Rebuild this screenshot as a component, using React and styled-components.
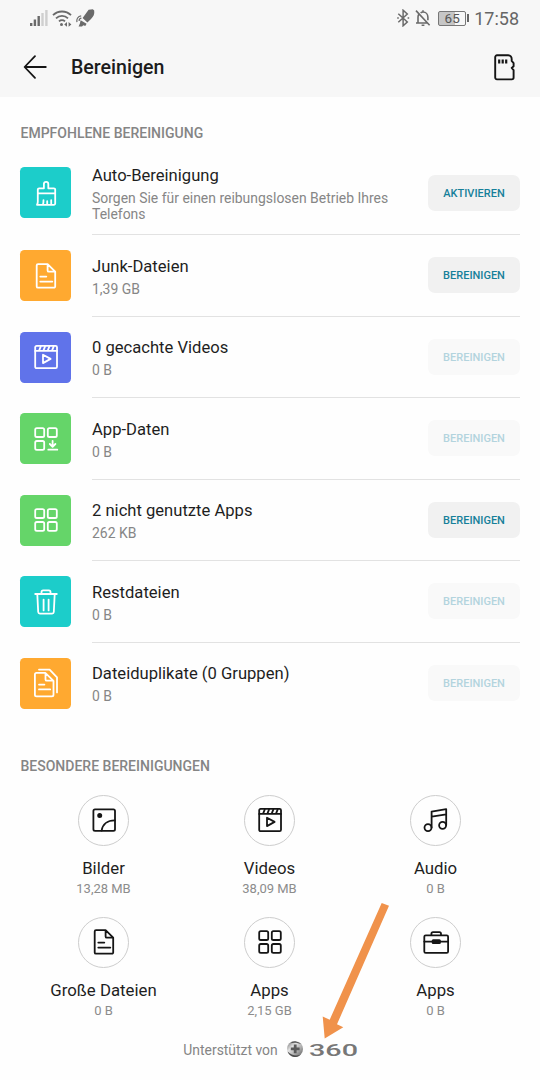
import React from 'react'
import styled, { createGlobalStyle } from 'styled-components'

const GlobalStyle = createGlobalStyle`
  * {
    box-sizing: border-box;
  }
  body {
    margin: 0;
    background: #fefefe;
    font-family: Roboto, "Noto Sans", sans-serif;
  }
`;

const FileIcon = () => (
  <Icon viewBox="0 0 30 30">
    <path d="M7 3.1h9.6l7.6 7.6v14.7a1.3 1.3 0 0 1-1.3 1.3H7a1.3 1.3 0 0 1-1.3-1.3v-21A1.3 1.3 0 0 1 7 3.1zM16.6 3.4v6a1.3 1.3 0 0 0 1.3 1.3h6M9.3 15.6h6M9.3 20.6h12" />
  </Icon>
)

const VideoIcon = () => (
  <Icon viewBox="0 0 30 30">
    <rect x="4.2" y="3.9" width="21.8" height="22.3" rx="1.4" />
    <path d="M4.2 8.9h21.8M8.3 8.2l1.4-3.6M12.6 8.2l1.4-3.6M16.9 8.2l1.4-3.6M21.2 8.2l1.4-3.6M12 12.7v8.4l7.6-4.2z" />
  </Icon>
)

const AppsIcon = () => (
  <Icon viewBox="0 0 30 30">
    <rect x="4.2" y="4.2" width="9" height="8.8" rx="1.6" />
    <rect x="16.8" y="4.2" width="9" height="8.8" rx="1.6" />
    <rect x="4.2" y="17" width="9" height="8.8" rx="1.6" />
    <rect x="16.8" y="17" width="9" height="8.8" rx="1.6" />
  </Icon>
)

const AppDataIcon = () => (
  <Icon viewBox="0 0 30 30">
    <rect x="4.2" y="4.2" width="9" height="8.8" rx="1.6" />
    <rect x="16.8" y="4.2" width="9" height="8.8" rx="1.6" />
    <rect x="4.2" y="17" width="9" height="8.8" rx="1.6" />
    <path d="M21.6 16.8v5.6M18.8 20l2.8 2.8 2.8-2.8M17.3 25.7h9" />
  </Icon>
)

const BrushIcon = () => (
  <Icon viewBox="0 0 30 30">
    <path d="M6.8 11.6a1.3 1.3 0 0 1 1.3-1.3h4.8V6a2.2 2.2 0 0 1 4.4 0v4.3h5.6a1.3 1.3 0 0 1 1.3 1.3v13.9a1.3 1.3 0 0 1-1.3 1.3H6c.6-1 .8-2 .8-3zM6.8 15.4h17.4M11.9 26.6c.5-1.2.6-2.6.6-4.4M16.2 26.4v-3.3M20.2 26.4v-4.2" />
  </Icon>
)

const TrashIcon = () => (
  <Icon viewBox="0 0 30 30">
    <path d="M4.2 7h21.6M10.5 6.8V5a1.6 1.6 0 0 1 1.6-1.6h5.8A1.6 1.6 0 0 1 19.5 5v1.8M6.3 7l.9 18a1.7 1.7 0 0 0 1.7 1.6h12.2a1.7 1.7 0 0 0 1.7-1.6l.9-18M12.6 12.6v10.8M17.6 12.6v10.8" />
  </Icon>
)

const DuplicateIcon = () => (
  <Icon viewBox="0 0 30 30">
    <path d="M5.5 4.9h8.8l8.2 8v13.9a1.6 1.6 0 0 1-1.6 1.6H5.5a1.6 1.6 0 0 1-1.6-1.6V6.5a1.6 1.6 0 0 1 1.6-1.6zM14.5 5.2v6.2a1.3 1.3 0 0 0 1.3 1.3h6.4M8 16.6h5.4M8 21.4h11.2M8 1.6h10.6l7.4 7.8v15" />
  </Icon>
)

const PictureIcon = () => (
  <Icon viewBox="0 0 30 30">
    <rect x="4.4" y="4.4" width="21.6" height="21.4" rx="1.6" />
    <circle cx="10.7" cy="10.6" r="1.6" fill="currentColor" />
    <path d="M12.6 25.6c1-6 5.6-10.2 13.2-10.2" />
  </Icon>
)

const MusicIcon = () => (
  <Icon viewBox="0 0 30 30">
    <circle cx="7" cy="22.6" r="3.5" />
    <circle cx="21.6" cy="20.3" r="3.5" />
    <path d="M10.6 22.4V6.6l14.6-2.5v16M10.8 11.7l14.4-2.4" />
  </Icon>
)

const CaseIcon = () => (
  <Icon viewBox="0 0 30 30">
    <rect x="3.3" y="8.3" width="23.8" height="17.6" rx="1.4" />
    <path d="M10.4 8.2V6.7a1.6 1.6 0 0 1 1.6-1.6h6.4A1.6 1.6 0 0 1 20 6.7v1.5M3.3 14.6h23.8" />
    <rect x="11.6" y="13.2" width="7.4" height="2.8" rx=".6" fill="currentColor" />
  </Icon>
)

const tasks = [
  { title: 'Auto-Bereinigung', info: 'Sorgen Sie für einen reibungslosen Betrieb Ihres Telefons', color: '#1ccdca', icon: BrushIcon, action: 'AKTIVIEREN', active: true },
  { title: 'Junk-Dateien', info: '1,39 GB', color: '#ffa930', icon: FileIcon, action: 'BEREINIGEN', active: true },
  { title: '0 gecachte Videos', info: '0 B', color: '#6073ea', icon: VideoIcon, action: 'BEREINIGEN' },
  { title: 'App-Daten', info: '0 B', color: '#65d569', icon: AppDataIcon, action: 'BEREINIGEN' },
  { title: '2 nicht genutzte Apps', info: '262 KB', color: '#65d569', icon: AppsIcon, action: 'BEREINIGEN', active: true },
  { title: 'Restdateien', info: '0 B', color: '#1ccdca', icon: TrashIcon, action: 'BEREINIGEN' },
  { title: 'Dateiduplikate (0 Gruppen)', info: '0 B', color: '#ffa930', icon: DuplicateIcon, action: 'BEREINIGEN' },
]

const categories = [
  { name: 'Bilder', size: '13,28 MB', icon: PictureIcon },
  { name: 'Videos', size: '38,09 MB', icon: VideoIcon },
  { name: 'Audio', size: '0 B', icon: MusicIcon },
  { name: 'Große Dateien', size: '0 B', icon: FileIcon },
  { name: 'Apps', size: '2,15 GB', icon: AppsIcon },
  { name: 'Apps', size: '0 B', icon: CaseIcon },
]

const StatusBar = () => (
  <Status>
    <StatusGroup>
      <svg width="18" height="17" viewBox="0 0 18 17">
        <path d="M0 13h2.4v3H0zM3.7 9.5h2.4V16H3.7zM7.5 6h2.4v10H7.5z" fill="#6a6a6a" />
        <path d="M11.3 3h2.4v13h-2.4zM15.2 0h2.4v16h-2.4z" fill="#cfcfcf" />
      </svg>
      <WifiIcon viewBox="0 0 20 17">
        <path d="M1 5.2a12.8 12.8 0 0 1 18 0M4 8.4a8.6 8.6 0 0 1 12 0M7 11.4a4.4 4.4 0 0 1 6 0" fill="none" stroke="#6a6a6a" strokeWidth="1.8" />
        <circle cx="9.5" cy="14.4" r="1.5" fill="#6a6a6a" />
        <path d="M12.2 14.4l2.8-2.3v4.6zM19.4 14.4l-2.8-2.3v4.6z" fill="#6a6a6a" />
      </WifiIcon>
      <RocketIcon viewBox="0 0 19 18">
        <path d="M12.6.8l4.200-.600 1.400 1.400c.500 3.600-.600 6-3.200 8.400L11.400 13.400 6.600 9z" fill="#6a6a6a" />
        <path d="M4.600 11.200l6 3.600-1.300 2.200-2-.700-1.300 1.300H2.600l1.300-3z" fill="#6a6a6a" />
        <path d="M1 13.200C.300 9.900 1.900 7.300 5.200 6.900M3.200 12c-.200-1.700.600-2.700 2.200-2.900" fill="none" stroke="#6a6a6a" strokeWidth="1.200" />
      </RocketIcon>
    </StatusGroup>
    <StatusGroup>
      <svg width="13" height="18" viewBox="0 0 13 18" fill="none" stroke="#6a6a6a" strokeWidth="1.500">
        <path d="M1.300 4.800l9 8.200-4.200 3.800V1.200l4.200 3.800-9 8.200" />
        <path d="M.200 9h1.600M10.600 9h1.600" strokeWidth="1.700" />
      </svg>
      <BellIcon viewBox="0 0 16 18" fill="none" stroke="#6a6a6a" strokeWidth="1.600">
        <path d="M3 14V8.200c0-1 .200-1.900.700-2.700M5.600 3.900C6.400 3.300 7.200 3 8 3c2.800 0 4.900 2.300 4.900 5.200v3M1 14h11.800M8 3V1.200M6.600 16.200h2.800M1 1.600l13.600 14.600" />
      </BellIcon>
      <Battery><BatteryText>65</BatteryText></Battery>
      <BatteryTip />
      <Clock>17:58</Clock>
    </StatusGroup>
  </Status>
)

const App = () => {
  return (
    <Screen>
      <GlobalStyle />
      <Header>
        <StatusBar />
        <TitleBar>
          <svg width="24" height="26" viewBox="0 0 24 26" fill="none" stroke="#151515" strokeWidth="1.800" strokeLinecap="round" strokeLinejoin="round">
            <path d="M12 2.200L1.600 13 12 23.800M1.900 13h20.900" />
          </svg>
          <Title>Bereinigen</Title>
          <svg width="22" height="27" viewBox="0 0 22 27" fill="none" stroke="#151515" strokeWidth="1.900" strokeLinejoin="round">
            <path d="M3 1.300h11.300c2 0 3.400 1.800 3.400 4v1.600l1.900 2.200v3.200l-1.900 1.600 1.900 2.200v7.500a1.800 1.800 0 0 1-1.800 1.800H3a1.800 1.800 0 0 1-1.800-1.800V3.100A1.800 1.800 0 0 1 3 1.300z" />
            <path d="M5.200 5.600v4M8.700 5.600v4M12.200 5.600v4" strokeWidth="2.200" />
          </svg>
        </TitleBar>
      </Header>

      <SectionTitle>EMPFOHLENE BEREINIGUNG</SectionTitle>
      <TaskList>
        {tasks.map((t, i) => (
          <TaskRow key={t.title} $first={i === 0}>
            <Tile $color={t.color}><t.icon /></Tile>
            <TaskBody $last={i === tasks.length - 1}>
              <TaskText>
                <TaskTitle>{t.title}</TaskTitle>
                <TaskInfo>{t.info}</TaskInfo>
              </TaskText>
              <ActionButton disabled={!t.active}>{t.action}</ActionButton>
            </TaskBody>
          </TaskRow>
        ))}
      </TaskList>

      <SectionTitle $second>BESONDERE BEREINIGUNGEN</SectionTitle>
      <CategoryGrid>
        {categories.map((c, i) => (
          <Category key={i}>
            <Circle><c.icon /></Circle>
            <CategoryName>{c.name}</CategoryName>
            <CategorySize>{c.size}</CategorySize>
          </Category>
        ))}
      </CategoryGrid>

      <Footer>
        <span>Unterstützt von</span>
        <Emblem viewBox="0 0 18 18">
          <defs>
            <linearGradient id="metal" x1="0" y1="0" x2="1" y2="1">
              <stop offset="0" stopColor="#666" />
              <stop offset=".35" stopColor="#e4e4e4" />
              <stop offset=".65" stopColor="#aaa" />
              <stop offset="1" stopColor="#555" />
            </linearGradient>
          </defs>
          <circle cx="9" cy="9" r="8" fill="url(#metal)" />
          <path d="M1.500 11.500a8 8 0 0 0 13 3.300c-4 1.500-9 1-13-3.300z" fill="#4c4c4c" />
          <path d="M4 3.300a8 8 0 0 1 11.600 1.200C12 2.700 8 2.200 4 3.300z" fill="#555" />
          <path d="M7.800 4.500h2.800v3h3v2.700h-3v3H7.800v-3h-3V7.500h3z" fill="#5a5a5a" />
        </Emblem>
        <Brand width="52" height="20" viewBox="0 0 52 20">
          <text x="1" y="15.500" textLength="49" lengthAdjust="spacingAndGlyphs">360</text>
        </Brand>
      </Footer>

      <Pointer width="70" height="138" viewBox="0 0 70 138">
        <path d="M61.700 1l7.300 2.700-52 118.600 6.300 3L4.700 136.500 2.700 114.500l7 3.200z" fill="#f0924b" />
      </Pointer>
    </Screen>
  )
}

const Screen = styled.div`
  position: relative;
  width: 540px;
  height: 1080px;
  overflow: hidden;
  background: #fefefe;
`;

const Header = styled.header`
  height: 97px;
  background: #f7f7f7;
`;

const Status = styled.div`
  height: 36px;
  padding: 0 21px 0 30px;
  display: flex;
  justify-content: space-between;
  align-items: center;
`;

const StatusGroup = styled.div`
  display: flex;
  align-items: center;
`;

const WifiIcon = styled.svg`
  width: 20px;
  height: 17px;
  margin-left: 4px;
`;

const RocketIcon = styled.svg`
  width: 19px;
  height: 18px;
  margin-left: 4px;
`;

const BellIcon = styled.svg`
  width: 16px;
  height: 18px;
  margin-left: 5px;
`;

const Battery = styled.div`
  width: 28px;
  height: 15px;
  margin-left: 7px;
  border: 1px solid #777;
  border-radius: 2px;
  display: flex;
  align-items: center;
  justify-content: center;
  background: linear-gradient(to right, #c6c6c6 62%, #f7f7f7 62%);
`;

const BatteryText = styled.span`
  font-size: 13.5px;
  line-height: 13px;
  color: #555;
`;

const BatteryTip = styled.div`
  width: 2px;
  height: 8px;
  margin-left: 1px;
  background: #666;
`;

const Clock = styled.span`
  margin-left: 5px;
  font-size: 18px;
  line-height: 22px;
  padding-top: 1px;
  color: #666;
`;

const TitleBar = styled.div`
  height: 61px;
  padding: 1px 24px 0 23px;
  display: flex;
  align-items: center;
`;

const Title = styled.h1`
  flex: 1;
  margin: 1px 0 0 24px;
  font-size: 19.6px;
  font-weight: 500;
  line-height: 24px;
  color: #1c1c1c;
`;

const SectionTitle = styled.h2`
  margin: ${props => (props.$second ? '32px' : '26px')} 0 0;
  padding-left: 20.5px;
  font-size: 14px;
  font-weight: 500;
  line-height: 20px;
  color: #858585;
`;

const TaskList = styled.div`
  padding: 8px 20px 0;
`;

const TaskRow = styled.div`
  height: ${props => (props.$first ? '84px' : '81.5px')};
  display: flex;
  align-items: center;
`;

const Tile = styled.div`
  width: 51px;
  height: 51px;
  margin-left: .4px;
  margin-bottom: .4px;
  border-radius: 4.5px;
  display: flex;
  align-items: center;
  justify-content: center;
  color: #fff;
  background: ${props => props.$color};
`;

const Icon = styled.svg`
  width: 30px;
  height: 30px;
  display: block;
  fill: none;
  stroke: currentColor;
  stroke-width: 1.8;
  stroke-linecap: round;
  stroke-linejoin: round;

  [fill="currentColor"] {
    fill: currentColor;
  }
`;

const TaskBody = styled.div`
  flex: 1;
  height: 100%;
  margin-left: 20.6px;
  display: flex;
  align-items: center;
  justify-content: space-between;
  border-bottom: 1px solid ${props => (props.$last ? 'transparent' : '#e2e2e2')};
`;

const TaskText = styled.div`
  width: 315px;
  padding-top: 2px;
`;

const TaskTitle = styled.div`
  font-size: 16.6px;
  line-height: 22px;
  color: #1e1e1e;
`;

const TaskInfo = styled.div`
  margin-top: 3px;
  font-size: 13.95px;
  line-height: 16px;
  color: #868686;
`;

const ActionButton = styled.button`
  width: 92px;
  height: 36px;
  padding: 1px 0 0;
  border: 0;
  border-radius: 7px;
  font-family: inherit;
  font-size: 11px;
  font-weight: 500;
  color: #16809a;
  background: #f1f1f1;

  &:disabled {
    color: #b3d4de;
    background: #f9f9f9;
  }
`;

const CategoryGrid = styled.div`
  padding: 18.5px 22px 0 20.5px;
  display: grid;
  grid-template-columns: repeat(3, 166px);
  grid-auto-rows: 122px;
`;

const Category = styled.div`
  display: flex;
  flex-direction: column;
  align-items: center;
`;

const Circle = styled.div`
  width: 51px;
  height: 51px;
  border: 1.5px solid #cdcdcd;
  border-radius: 50%;
  display: flex;
  align-items: center;
  justify-content: center;
  color: #151515;
`;

const CategoryName = styled.div`
  margin-top: 11px;
  font-size: 16.8px;
  line-height: 22px;
  color: #1e1e1e;
`;

const CategorySize = styled.div`
  margin-top: 2px;
  font-size: 13px;
  line-height: 16px;
  color: #8c8c8c;
`;

const Footer = styled.footer`
  display: flex;
  align-items: center;
  justify-content: center;
  height: 20px;
  margin-top: 1px;
  padding-left: 3px;
  font-size: 13.9px;
  color: #858585;
`;

const Emblem = styled.svg`
  width: 18px;
  height: 18px;
  margin: -1px 4px 0 8px;
`;

const Brand = styled.svg`
  display: block;

  text {
    font-family: Roboto, sans-serif;
    font-size: 17px;
    font-weight: 500;
    fill: #777;
  }
`;

const Pointer = styled.svg`
  position: absolute;
  left: 320px;
  top: 902px;
`;

export default App
